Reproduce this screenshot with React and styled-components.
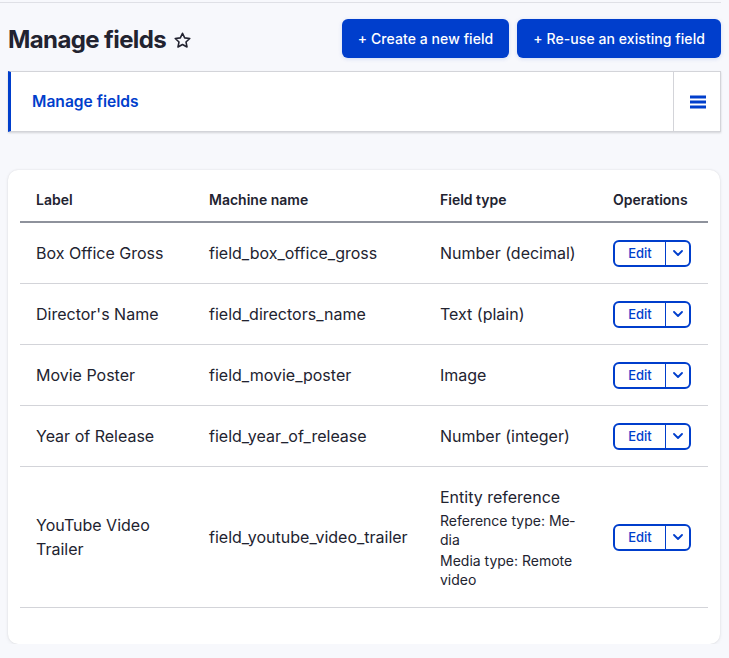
import React from "react";
import styled, { createGlobalStyle } from "styled-components";

const Global = createGlobalStyle`
  html, body { margin: 0; padding: 0; background: #f7f8fc; }
  body { font-family: Inter, "Noto Sans", Arial, sans-serif; color: #222330; -webkit-font-smoothing: antialiased; }
  * { box-sizing: border-box; }
`;

const Page = styled.div`
  width: 721px;
  padding-top: 2px;
`;

const TopRule = styled.div`
  height: 1px;
  background: #dfe0e6;
`;

const Content = styled.div`
  margin-left: 8px;
`;

const Header = styled.div`
  display: flex;
  align-items: flex-start;
  justify-content: space-between;
  margin-top: 16px;
`;

const TitleWrap = styled.div`
  display: flex;
  align-items: center;
  gap: 7px;
  height: 42px;
`;

const Title = styled.h1`
  margin: 0;
  font-size: 24px;
  font-weight: 700;
  letter-spacing: -0.025em;
  line-height: 1.2;
  color: #222330;
`;

const Actions = styled.div`
  display: flex;
  gap: 8px;
`;

const PrimaryButton = styled.button`
  height: 39px;
  padding: 0 16px;
  border: none;
  border-radius: 6px;
  background: #003ecc;
  color: #fff;
  font-family: inherit;
  font-size: 14px;
  font-weight: 500;
  letter-spacing: 0.005em;
  box-shadow: 0 1px 4px rgba(0, 62, 204, 0.15);
  cursor: pointer;
`;

const Tabs = styled.div`
  display: flex;
  height: 61px;
  margin-top: 10px;
  background: #fff;
  border: 1px solid #d3d4d9;
  border-left: 3px solid #003ecc;
  box-shadow: 0 1px 2px rgba(0, 0, 0, 0.15);
`;

const Tab = styled.a`
  flex: 1;
  display: flex;
  align-items: center;
  padding-left: 21px;
  color: #003ecc;
  font-size: 15.6px;
  font-weight: 600;
  text-decoration: none;
`;

const MenuButton = styled.button`
  width: 47px;
  border: none;
  border-left: 1px solid #d3d4d9;
  background: #fff;
  display: flex;
  align-items: center;
  justify-content: center;
  padding: 0 0 0 2px;
`;

const Card = styled.div`
  margin-top: 38px;
  width: 712px;
  background: #fff;
  border-radius: 10px;
  box-shadow: 0 0 2px rgba(0, 0, 0, 0.1), 0 1px 4px rgba(0, 0, 0, 0.06);
  padding: 7px 12px 36px;
`;

const Table = styled.table`
  width: 100%;
  border-collapse: collapse;
  table-layout: fixed;
`;

const Th = styled.th`
  height: 45px;
  padding: 0 16px;
  text-align: left;
  font-size: 14px;
  font-weight: 600;
  color: #222330;
  border-bottom: 2px solid #8e929c;
  vertical-align: middle;
`;

const Td = styled.td`
  padding: ${(p) => (p.$compact ? "0 16px" : "18px 16px")};
  font-size: 16px;
  line-height: 24px;
  color: #222330;
  border-bottom: 1px solid #d3d4d9;
  vertical-align: middle;
  white-space: ${(p) => (p.$nowrap ? "nowrap" : "normal")};
`;

const Sub = styled.div`
  font-size: 14px;
  line-height: 19px;
  margin-top: 2px;
`;

const Drop = styled.div`
  display: flex;
  width: fit-content;
  height: 27px;
  border: 2px solid #003ecc;
  border-radius: 6px;
  background: #fff;
  overflow: hidden;
`;

const DropMain = styled.button`
  width: 50px;
  border: none;
  background: transparent;
  color: #003ecc;
  font-family: inherit;
  font-size: 13px;
  font-weight: 500;
  padding: 0;
`;

const DropToggle = styled.button`
  width: 24px;
  border: none;
  border-left: 1px solid #003ecc;
  background: transparent;
  display: flex;
  align-items: center;
  justify-content: center;
  padding: 0;
`;

const Star = () => (
  <svg width="19" height="19" viewBox="0 0 24 24" fill="none" stroke="#222330" strokeWidth="2" strokeLinejoin="round">
    <path d="M12 2.8l2.75 5.9 6.45.75-4.8 4.4 1.3 6.35L12 17l-5.7 3.2 1.3-6.35-4.8-4.4 6.45-.75z" />
  </svg>
);

const Hamburger = () => (
  <svg width="16" height="14" viewBox="0 0 16 14">
    <rect x="0" y="0.5" width="16" height="3" fill="#003ecc" />
    <rect x="0" y="5.5" width="16" height="3" fill="#003ecc" />
    <rect x="0" y="10.5" width="16" height="3" fill="#003ecc" />
  </svg>
);

const Chevron = () => (
  <svg width="10" height="6" viewBox="0 0 10 6" fill="none" stroke="#003ecc" strokeWidth="1.8" strokeLinecap="round" strokeLinejoin="round">
    <path d="M1 1l4 4 4-4" />
  </svg>
);

const DropButton = () => (
  <Drop>
    <DropMain>Edit</DropMain>
    <DropToggle aria-label="List additional actions">
      <Chevron />
    </DropToggle>
  </Drop>
);

const rows = [
  { label: "Box Office Gross", machine: "field_box_office_gross", type: "Number (decimal)" },
  { label: "Director's Name", machine: "field_directors_name", type: "Text (plain)" },
  { label: "Movie Poster", machine: "field_movie_poster", type: "Image" },
  { label: "Year of Release", machine: "field_year_of_release", type: "Number (integer)" },
  {
    label: "YouTube Video Trailer",
    machine: "field_youtube_video_trailer",
    type: "Entity reference",
    subs: ["Reference type: Me\u00ADdia", "Media type: Remote video"],
  },
];

export default function App() {
  return (
    <>
      <Global />
      <Page>
        <TopRule />
        <Content>
          <Header>
            <TitleWrap>
              <Title>Manage fields</Title>
              <Star />
            </TitleWrap>
            <Actions>
              <PrimaryButton>+ Create a new field</PrimaryButton>
              <PrimaryButton>+ Re-use an existing field</PrimaryButton>
            </Actions>
          </Header>
          <Tabs>
            <Tab href="#">Manage fields</Tab>
            <MenuButton aria-label="Tabs display toggle">
              <Hamburger />
            </MenuButton>
          </Tabs>
          <Card>
            <Table>
              <colgroup>
                <col style={{ width: 173 }} />
                <col style={{ width: 231 }} />
                <col style={{ width: 173 }} />
                <col style={{ width: 111 }} />
              </colgroup>
              <thead>
                <tr>
                  <Th>Label</Th>
                  <Th>Machine name</Th>
                  <Th>Field type</Th>
                  <Th>Operations</Th>
                </tr>
              </thead>
              <tbody>
                {rows.map((r) => (
                  <tr key={r.machine}>
                    <Td>{r.label}</Td>
                    <Td $nowrap>{r.machine}</Td>
                    <Td>
                      {r.type}
                      {r.subs && r.subs.map((s) => <Sub key={s}>{s}</Sub>)}
                    </Td>
                    <Td $compact>
                      <DropButton />
                    </Td>
                  </tr>
                ))}
              </tbody>
            </Table>
          </Card>
        </Content>
      </Page>
    </>
  );
}
